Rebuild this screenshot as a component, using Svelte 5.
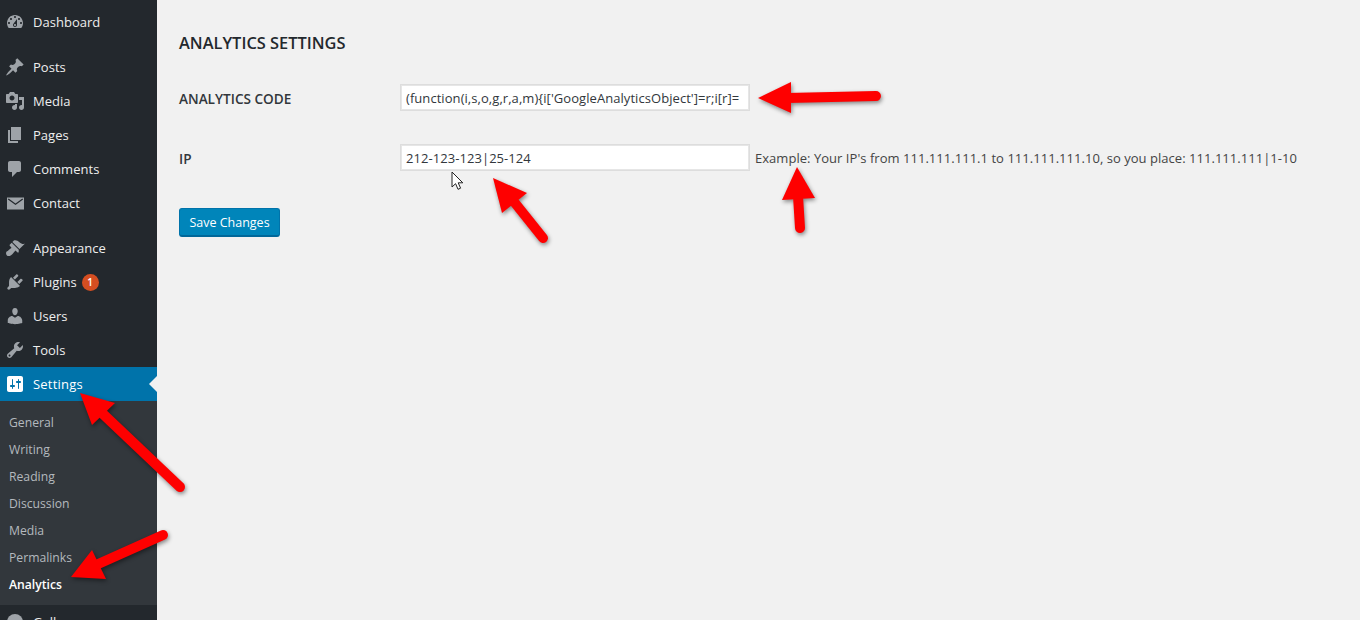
<script>
	const menu = [
		{ group: [
			{ name: 'Dashboard', d: 'M3.76 16h12.48c1.1-1.37 1.76-3.11 1.76-5 0-4.42-3.58-8-8-8s-8 3.58-8 8c0 1.89.66 3.63 1.76 5zM10 4c.55 0 1 .45 1 1s-.45 1-1 1-1-.45-1-1 .45-1 1-1zM6 6c.55 0 1 .45 1 1s-.45 1-1 1-1-.45-1-1 .45-1 1-1zm8 0c.55 0 1 .45 1 1s-.45 1-1 1-1-.45-1-1 .45-1 1-1zm-5.37 5.55L12 7v6c0 1.1-.9 2-2 2s-2-.9-2-2c0-.57.24-1.08.63-1.45zM4 10c.55 0 1 .45 1 1s-.45 1-1 1-1-.45-1-1 .45-1 1-1zm12 0c.55 0 1 .45 1 1s-.45 1-1 1-1-.45-1-1 .45-1 1-1zm-5 3c0-.55-.45-1-1-1s-1 .45-1 1 .45 1 1 1 1-.45 1-1z' }
		] },
		{ group: [
			{ name: 'Posts', d: 'M10.44 3.02l1.82-1.82 6.36 6.35-1.83 1.82c-1.05-.68-2.48-.57-3.41.36l-.75.75c-.92.93-1.04 2.35-.35 3.41l-1.83 1.82-2.41-2.41-2.8 2.79c-.42.42-3.38 2.71-3.8 2.29s1.86-3.39 2.28-3.81l2.79-2.79L4.1 9.36l1.83-1.82c1.05.69 2.48.57 3.4-.36l.75-.75c.93-.92 1.05-2.35.36-3.41z' },
			{ name: 'Media', d: 'M13 11V4c0-.55-.45-1-1-1h-1.67L9 1H5L3.67 3H2c-.55 0-1 .45-1 1v7c0 .55.45 1 1 1h10c.55 0 1-.45 1-1zM7 4.5c1.38 0 2.5 1.12 2.5 2.5S8.38 9.5 7 9.5 4.5 8.38 4.5 7 5.62 4.5 7 4.5zM14 6h5v10.5c0 1.38-1.12 2.5-2.5 2.5S14 17.88 14 16.5s1.12-2.5 2.5-2.5c.17 0 .34.02.5.05V9h-3V6zm-4 8.05V13h2v3.5c0 1.38-1.12 2.5-2.5 2.5S7 17.88 7 16.5 8.12 14 9.5 14c.17 0 .34.02.5.05z' },
			{ name: 'Pages', d: 'M6 15V2h10v13H6zm-1 1h8v2H3V5h2v11z' },
			{ name: 'Comments', d: 'M5 2h9c1.1 0 2 .9 2 2v7c0 1.1-.9 2-2 2h-2l-5 5v-5H5c-1.1 0-2-.9-2-2V4c0-1.1.9-2 2-2z' },
			{ name: 'Contact', d: 'M2 4.5h17v12H2zM3.6 5.5L2.9 6.4l7.6 5.6 7.6-5.6-.7-.9-6.9 5z' }
		] },
		{ group: [
			{ name: 'Appearance', d: 'M14.48 11.06L7.41 3.99l1.5-1.5c.5-.56 2.3-.47 3.51.32 1.21.8 1.43 1.28 2.91 2.1 1.18.64 2.45 1.26 4.45.85zm-.71.71L6.7 4.7 4.93 6.47c-.39.39-.39 1.02 0 1.41l1.06 1.06c.39.39.39 1.03 0 1.42-.6.6-1.43 1.11-2.21 1.69-.35.26-.7.53-1.01.84C1.43 13.23.91 14.13 1.09 15.64c.18 1.5 1.02 2.34 2.47 2.46 1.52.12 2.42-.41 3.74-1.73.32-.31.58-.66.84-1.01.58-.78 1.09-1.61 1.69-2.21.39-.39 1.03-.39 1.41 0l1.06 1.06c.39.39 1.03.39 1.42 0z' },
			{ name: 'Plugins', badge: 1, d: 'M13.11 4.36L9.87 7.6 8 5.73l3.24-3.24c.35-.34 1.05-.2 1.56.32.52.51.66 1.21.31 1.55zm-8 1.77l.91-1.12 9.01 9.01-1.19.84c-.71.71-2.63 1.16-3.82 1.16H6.14L4.9 17.26c-.59.59-1.54.59-2.12 0-.59-.58-.59-1.53 0-2.12l1.24-1.24v-3.88c0-1.13.4-3.19 1.09-3.89zm7.26 3.97l3.24-3.24c.34-.35 1.04-.21 1.55.31.52.51.66 1.21.31 1.55l-3.24 3.25z' },
			{ name: 'Users', d: 'M10 9.25c-2.27 0-2.73-3.44-2.73-3.44C7 4.02 7.82 2 9.97 2c2.16 0 2.98 2.02 2.71 3.81 0 0-.41 3.44-2.68 3.44zm0 2.57L12.72 10c2.39 0 4.52 2.33 4.52 4.53v2.49s-3.65 1.13-7.24 1.13c-3.65 0-7.24-1.13-7.24-1.13v-2.49c0-2.25 1.94-4.48 4.47-4.48z' },
			{ name: 'Tools', d: 'M16.68 9.77c-1.34 1.34-3.3 1.67-4.95.99l-5.41 6.52c-.99.99-2.59.99-3.58 0s-.99-2.59 0-3.57l6.52-5.42c-.68-1.65-.35-3.61.99-4.95 1.28-1.28 3.12-1.62 4.72-1.06l-2.89 2.89 2.82 2.82 2.86-2.87c.53 1.58.18 3.39-1.08 4.65zM3.81 16.21c.4.39 1.04.39 1.43 0 .4-.4.4-1.04 0-1.43-.39-.4-1.03-.4-1.43 0-.39.39-.39 1.03 0 1.43z' },
			{ name: 'Settings', current: true, d: 'M18 16V4c0-1.1-.9-2-2-2H4c-1.1 0-2 .9-2 2v12c0 1.1.9 2 2 2h12c1.1 0 2-.9 2-2zM8 11h1c.55 0 1 .45 1 1s-.45 1-1 1H8v1.5c0 .28-.22.5-.5.5s-.5-.22-.5-.5V13H6c-.55 0-1-.45-1-1s.45-1 1-1h1V5.5c0-.28.22-.5.5-.5s.5.22.5.5V11zm5-2h-1c-.55 0-1-.45-1-1s.45-1 1-1h1V5.5c0-.28.22-.5.5-.5s.5.22.5.5V7h1c.55 0 1 .45 1 1s-.45 1-1 1h-1v5.5c0 .28-.22.5-.5.5s-.5-.22-.5-.5V9z' }
		] }
	];

	const submenu = ['General', 'Writing', 'Reading', 'Discussion', 'Media', 'Permalinks', 'Analytics'];

	// head triangle + shaft end, in page pixels
	const arrows = [
		{ head: '758,98 791,82 791,113', from: [787, 98], to: [876, 96] },
		{ head: '493,178 527,193 502,213', from: [515, 203], to: [543, 238] },
		{ head: '797,167 782,200 815,198', from: [798, 196], to: [800, 228] },
		{ head: '80,393 115,403 92,425', from: [103, 414], to: [180, 487] },
		{ head: '71,577 92,550 106,579', from: [96, 565], to: [163, 535] }
	];
</script>

<div class="page">
	<nav class="sidebar">
		{#each menu as section}
			<ul class="section">
				{#each section.group as item}
					<li class="item" class:current={item.current}>
						<svg class="icon" viewBox="0 0 20 20" width="20" height="20"><path fill-rule="evenodd" d={item.d} /></svg>
						<span>{item.name}</span>
						{#if item.badge}<span class="badge">{item.badge}</span>{/if}
					</li>
				{/each}
			</ul>
		{/each}
		<ul class="submenu">
			{#each submenu as sub}
				<li class:active={sub === 'Analytics'}>{sub}</li>
			{/each}
		</ul>
		<div class="item after">
			<svg class="icon" viewBox="0 0 20 20" width="20" height="20"><circle cx="10" cy="10" r="8" /></svg>
			<span>Gallery</span>
		</div>
	</nav>

	<main class="content">
		<h2>Analytics Settings</h2>
		<div class="row">
			<label for="code">Analytics Code</label>
			<input id="code" type="text" value="(function(i,s,o,g,r,a,m){'{'}i['GoogleAnalyticsObject']=r;i[r]=" />
		</div>
		<div class="row">
			<label for="ip">IP</label>
			<input id="ip" type="text" value="212-123-123|25-124" />
			<span class="hint">Example: Your IP's from 111.111.111.1 to 111.111.111.10, so you place: 111.111.111|1-10</span>
		</div>
		<button class="save">Save Changes</button>
	</main>

	<svg class="arrows" width="1360" height="620" viewBox="0 0 1360 620">
		{#each arrows as a}
			<polygon points={a.head} />
			<line x1={a.from[0]} y1={a.from[1]} x2={a.to[0]} y2={a.to[1]} />
		{/each}
	</svg>

	<svg class="cursor" width="13" height="20" viewBox="0 0 13 20">
		<path d="M1 1v15l3.6-3.3 2.4 5.6 2.6-1.1-2.4-5.4h4.6z" />
	</svg>
</div>

<style>
	:global(body) {
		margin: 0;
		background: #f1f1f1;
	}

	.page {
		position: relative;
		display: flex;
		height: 620px;
		overflow: hidden;
		font-family: 'Open Sans', sans-serif;
		font-size: 13px;
		color: #444;
		background: #f1f1f1;
	}

	.sidebar {
		width: 157px;
		flex-shrink: 0;
		padding-top: 5px;
		background: #23282d;
	}

	ul {
		list-style: none;
		margin: 0;
		padding: 0;
	}

	.section + .section {
		margin-top: 11px;
	}

	.item {
		position: relative;
		display: flex;
		align-items: center;
		height: 34px;
		padding-left: 5px;
		color: #eee;
		line-height: 18px;
		letter-spacing: 0.02px;
	}

	.item .icon {
		flex-shrink: 0;
		margin-right: 8px;
		fill: #9ea3a8;
	}

	.item.current {
		background: #0073aa;
		color: #fff;
		letter-spacing: 0.2px;
	}

	.item.current .icon {
		fill: #fff;
	}

	.item.current::after {
		content: '';
		position: absolute;
		right: 0;
		top: 9px;
		border: 8px solid transparent;
		border-right-color: #f1f1f1;
	}

	.badge {
		width: 17px;
		height: 17px;
		margin-left: 5px;
		border-radius: 50%;
		background: #d54e21;
		color: #fff;
		font-size: 10px;
		font-weight: 600;
		line-height: 17px;
		text-align: center;
	}

	.submenu {
		padding: 8px 0 7px;
		background: #32373c;
	}

	.submenu li {
		height: 27px;
		padding-left: 9px;
		color: #b4b9be;
		font-size: 12.2px;
		line-height: 27px;
	}

	.submenu li.active {
		color: #fff;
		font-weight: 600;
	}

	.content {
		flex: 1;
		padding: 0 22px;
	}

	h2 {
		margin: 34px 0 32px;
		color: #23282d;
		font-size: 16.4px;
		font-weight: 600;
		line-height: 18px;
		text-transform: uppercase;
	}

	.row {
		display: flex;
		align-items: center;
		height: 27px;
		margin-bottom: 33px;
	}

	label {
		width: 221px;
		flex-shrink: 0;
		padding-top: 1px;
		color: #32373c;
		font-size: 13.6px;
		font-weight: 600;
		text-transform: uppercase;
	}

	input {
		box-sizing: border-box;
		width: 350px;
		height: 27px;
		padding: 0 5px;
		border: 1px solid #ddd;
		background: #fff;
		color: #32373c;
		font: inherit;
		letter-spacing: 0.06px;
		outline: none;
		box-shadow: inset 0 0 0 1px #e6e6e6;
	}

	.hint {
		margin-left: 5px;
		color: #444;
		letter-spacing: 0.035px;
		white-space: nowrap;
	}

	.save {
		display: block;
		box-sizing: border-box;
		width: 101px;
		height: 29px;
		margin-top: 37px;
		padding: 0;
		border: 1px solid #0073aa;
		border-bottom-color: #006799;
		border-bottom-width: 2px;
		border-radius: 3px;
		background: #0085ba;
		color: #fff;
		font: inherit;
		font-size: 12.5px;
	}

	.arrows {
		position: absolute;
		left: 0;
		top: 0;
		filter: drop-shadow(1px 2px 2px rgba(0, 0, 0, 0.45));
		pointer-events: none;
	}

	.arrows polygon {
		fill: #fe0000;
	}

	.arrows line {
		stroke: #fe0000;
		stroke-width: 10;
		stroke-linecap: round;
	}

	.cursor {
		position: absolute;
		left: 451px;
		top: 171px;
	}

	.cursor path {
		fill: #fff;
		stroke: #222;
		stroke-width: 1;
	}
</style>
